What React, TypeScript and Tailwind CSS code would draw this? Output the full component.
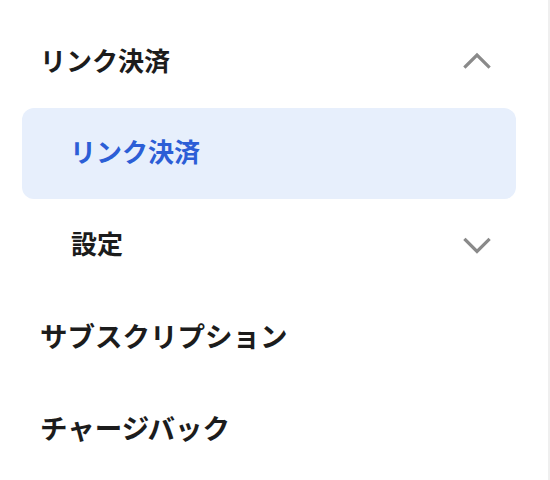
const font = { fontFamily: '"Noto Sans CJK JP", "Noto Sans", sans-serif' };

function Chevron({ up }: { up?: boolean }) {
  return (
    <svg width="28" height="18" viewBox="0 0 28 18" fill="none" className="shrink-0">
      <polyline
        points={up ? "2.5,14.5 14,3 25.5,14.5" : "2.5,3 14,14.5 25.5,3"}
        stroke="#8a8a8a"
        strokeWidth="3.2"
        strokeLinecap="square"
      />
    </svg>
  );
}

export default function App() {
  return (
    <div className="w-[550px] h-[480px] bg-white flex" style={font}>
      <div className="w-[550px] h-full border-r-2 border-[#efefef] pt-4 pl-[22px] pr-[32px]">
        <div className="h-[92px] flex items-center justify-between pl-[18px] pr-[25px]">
          <span className="text-[26px] leading-none mb-[5px] font-bold text-[#1c1c1c]">リンク決済</span>
          <div className="mb-[2px]">
            <Chevron up />
          </div>
        </div>
        <div className="h-[91px] rounded-xl bg-[#e7effc] flex items-center pl-[48px]">
          <span className="text-[26px] leading-none mb-[5px] font-bold text-[#2c5ed6]">リンク決済</span>
        </div>
        <div className="h-[92px] flex items-center justify-between pl-[49px] pr-[25px]">
          <span className="text-[26px] leading-none mb-[5px] font-bold text-[#1c1c1c]">設定</span>
          <div className="mt-[2px]">
            <Chevron />
          </div>
        </div>
        <div className="h-[92px] flex items-center pl-[18px]">
          <span className="text-[27.5px] leading-none mb-[3px] font-bold text-[#1c1c1c]">サブスクリプション</span>
        </div>
        <div className="h-[92px] flex items-center pl-[18px]">
          <span className="text-[27.5px] leading-none mb-[2px] font-bold text-[#1c1c1c]">チャージバック</span>
        </div>
      </div>
    </div>
  );
}
